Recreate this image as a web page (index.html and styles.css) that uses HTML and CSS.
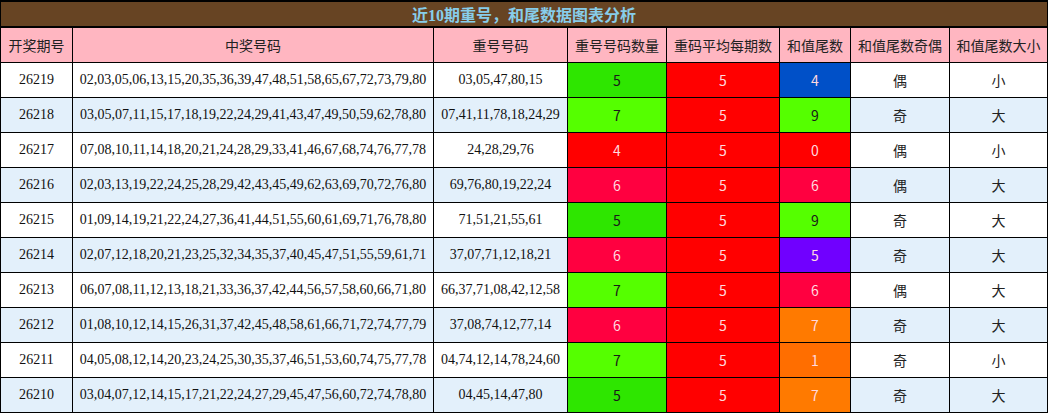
FILE: index.html
```html
<!DOCTYPE html>
<html lang="zh">
<head>
<meta charset="utf-8">
<title>近10期重号，和尾数据图表分析</title>
<link rel="stylesheet" href="styles.css">
</head>
<body>
<table class="chart">
  <colgroup>
    <col class="c1"><col class="c2"><col class="c3"><col class="c4"><col class="c5"><col class="c6"><col class="c7"><col class="c8">
  </colgroup>
  <thead>
    <tr class="title-row"><th colspan="8">近10期重号，和尾数据图表分析</th></tr>
    <tr class="head-row">
      <th>开奖期号</th><th>中奖号码</th><th>重号号码</th><th>重号号码数量</th><th>重码平均每期数</th><th>和值尾数</th><th>和值尾数奇偶</th><th>和值尾数大小</th>
    </tr>
  </thead>
  <tbody>
    <tr class="odd"><td class="num">26219</td><td class="num">02,03,05,06,13,15,20,35,36,39,47,48,51,58,65,67,72,73,79,80</td><td class="num">03,05,47,80,15</td><td class="val dark g1">5</td><td class="val light red">5</td><td class="val light blue">4</td><td class="cn">偶</td><td class="cn">小</td></tr>
    <tr class="even"><td class="num">26218</td><td class="num">03,05,07,11,15,17,18,19,22,24,29,41,43,47,49,50,59,62,78,80</td><td class="num">07,41,11,78,18,24,29</td><td class="val dark g2">7</td><td class="val light red">5</td><td class="val dark g2">9</td><td class="cn">奇</td><td class="cn">大</td></tr>
    <tr class="odd"><td class="num">26217</td><td class="num">07,08,10,11,14,18,20,21,24,28,29,33,41,46,67,68,74,76,77,78</td><td class="num">24,28,29,76</td><td class="val light red">4</td><td class="val light red">5</td><td class="val light red">0</td><td class="cn">偶</td><td class="cn">小</td></tr>
    <tr class="even"><td class="num">26216</td><td class="num">02,03,13,19,22,24,25,28,29,42,43,45,49,62,63,69,70,72,76,80</td><td class="num">69,76,80,19,22,24</td><td class="val light crimson">6</td><td class="val light red">5</td><td class="val light crimson">6</td><td class="cn">偶</td><td class="cn">大</td></tr>
    <tr class="odd"><td class="num">26215</td><td class="num">01,09,14,19,21,22,24,27,36,41,44,51,55,60,61,69,71,76,78,80</td><td class="num">71,51,21,55,61</td><td class="val dark g1">5</td><td class="val light red">5</td><td class="val dark g2">9</td><td class="cn">奇</td><td class="cn">大</td></tr>
    <tr class="even"><td class="num">26214</td><td class="num">02,07,12,18,20,21,23,25,32,34,35,37,40,45,47,51,55,59,61,71</td><td class="num">37,07,71,12,18,21</td><td class="val light crimson">6</td><td class="val light red">5</td><td class="val light purple">5</td><td class="cn">奇</td><td class="cn">大</td></tr>
    <tr class="odd"><td class="num">26213</td><td class="num">06,07,08,11,12,13,18,21,33,36,37,42,44,56,57,58,60,66,71,80</td><td class="num">66,37,71,08,42,12,58</td><td class="val dark g2">7</td><td class="val light red">5</td><td class="val light crimson">6</td><td class="cn">偶</td><td class="cn">大</td></tr>
    <tr class="even"><td class="num">26212</td><td class="num">01,08,10,12,14,15,26,31,37,42,45,48,58,61,66,71,72,74,77,79</td><td class="num">37,08,74,12,77,14</td><td class="val light crimson">6</td><td class="val light red">5</td><td class="val light orange1">7</td><td class="cn">奇</td><td class="cn">大</td></tr>
    <tr class="odd"><td class="num">26211</td><td class="num">04,05,08,12,14,20,23,24,25,30,35,37,46,51,53,60,74,75,77,78</td><td class="num">04,74,12,14,78,24,60</td><td class="val dark g2">7</td><td class="val light red">5</td><td class="val light orange2">1</td><td class="cn">奇</td><td class="cn">小</td></tr>
    <tr class="even"><td class="num">26210</td><td class="num">03,04,07,12,14,15,17,21,22,24,27,29,45,47,56,60,72,74,78,80</td><td class="num">04,45,14,47,80</td><td class="val dark g1">5</td><td class="val light red">5</td><td class="val light orange1">7</td><td class="cn">奇</td><td class="cn">大</td></tr>
  </tbody>
</table>
</body>
</html>
```

FILE: styles.css
```css
html, body {
  margin: 0;
  padding: 0;
  background: #ffffff;
}

.chart {
  border-collapse: collapse;
  table-layout: fixed;
  width: 1048px;
  font-family: "Liberation Serif", "Noto Sans CJK SC", serif;
  font-size: 14px;
  color: #111111;
}

.c1 { width: 72px; }
.c2 { width: 361px; }
.c3 { width: 134px; }
.c4 { width: 99px; }
.c5 { width: 113px; }
.c6 { width: 71px; }
.c7 { width: 99px; }
.c8 { width: 98px; }

.chart th,
.chart td {
  border: 1px solid #000000;
  padding: 0;
  text-align: center;
  white-space: nowrap;
  overflow: hidden;
}

.title-row th {
  height: 24px;
  background: #674423;
  color: #87cdea;
  font-family: "Liberation Serif", "Noto Sans CJK SC", serif;
  font-size: 16px;
  font-weight: bold;
  border-bottom: 2px solid #000000;
  border-top: 2px solid #000000;
}

.head-row th {
  height: 34px;
  background: #ffb6c1;
  font-family: "Noto Sans CJK SC", sans-serif;
  font-weight: normal;
  font-size: 14px;
  color: #222222;
}

.chart td {
  height: 34px;
}

.odd td { background: #ffffff; }
.even td { background: #e3f0fb; }

.num {
  font-family: "Liberation Serif", serif;
}

.cn {
  font-family: "Noto Sans CJK SC", sans-serif;
  color: #222222;
}

.val {
  font-family: "Noto Sans CJK SC", "Noto Sans", sans-serif;
  font-size: 14px;
}

.dark { color: #1a1a1a; }
.light { color: #ffd9df; }

.odd .g1, .even .g1 { background: #2ee600; }
.odd .g2, .even .g2 { background: #55ff00; }
.odd .red, .even .red { background: #ff0000; }
.odd .crimson, .even .crimson { background: #ff0040; }
.odd .blue, .even .blue { background: #0050c8; }
.odd .purple, .even .purple { background: #7000ff; }
.odd .orange1, .even .orange1 { background: #ff7a00; }
.odd .orange2, .even .orange2 { background: #ff6e00; }
```
